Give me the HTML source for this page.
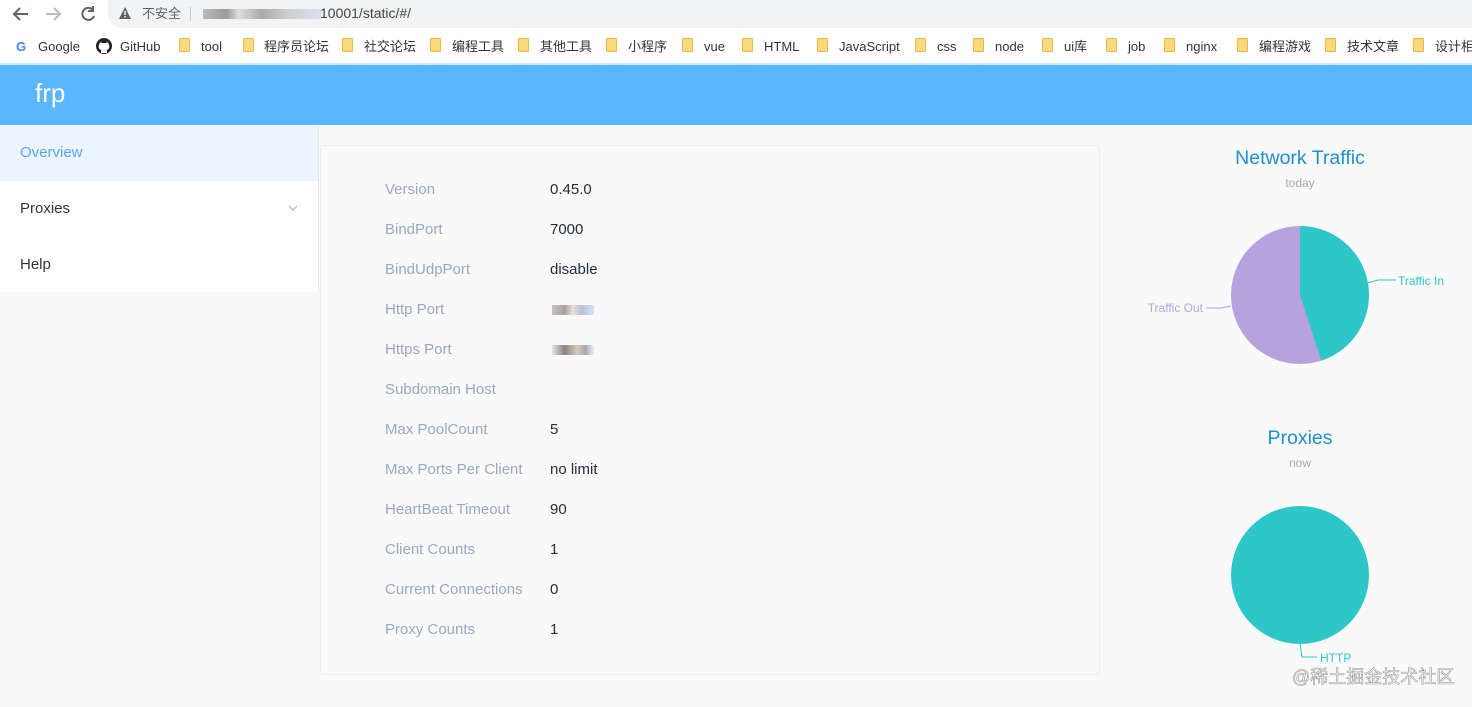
<!DOCTYPE html>
<html><head><meta charset="utf-8"><style>
*{margin:0;padding:0;box-sizing:border-box}
body{width:1472px;height:707px;overflow:hidden;background:#f9f9f9;font-family:"Liberation Sans","Noto Sans CJK SC",sans-serif;position:relative}
.abs{position:absolute}
.top{left:0;top:0;width:1472px;height:30px;background:#fff}
.addr{left:108px;top:0;width:1364px;height:28px;background:#f1f3f4;border-radius:0 0 0 14px}
.bm{left:0;top:30px;width:1472px;height:33px;background:#fff;font-size:13px;color:#333}
.bm span{position:absolute;top:9px;white-space:nowrap;line-height:15px;height:15px;overflow:visible}
.fold{position:absolute;top:8px;width:11px;height:14px;background:#fcd97a;border:1px solid #e5b94a;border-radius:1px}
.line{left:0;top:63px;width:1472px;height:2px;background:#cfe8fb}
.hdr{left:0;top:65px;width:1472px;height:60px;background:#58b7ff}
.side{left:0;top:125px;width:319px;height:167px;background:#fff;border-right:1px solid #e6e6e6}
.card{left:320px;top:145px;width:780px;height:530px;background:#f9f9f9;border:1px solid #ebeef5;border-radius:3px}
.k{position:absolute;left:385px;font-size:15px;color:#99a9bf}
.v{position:absolute;left:550px;font-size:15px;color:#1f2d3d}
</style></head><body>
<div class="abs top"></div>
<div class="abs addr"></div>
<svg class="abs" style="left:0;top:0" width="110" height="28"><path d="M28 14H14M20 8l-6 6 6 6" stroke="#5f6368" stroke-width="2" fill="none"/><path d="M46 14h14M54 8l6 6-6 6" stroke="#bbb" stroke-width="2" fill="none"/><path d="M93 10a6 6 0 1 0 1 6M93 6v5h-5" stroke="#5f6368" stroke-width="2" fill="none"/></svg>
<svg class="abs" style="left:118px;top:6px" width="14" height="14"><path d="M7 1L13 13H1Z" fill="#5f6368"/><rect x="6.3" y="5" width="1.4" height="4" fill="#fff"/><rect x="6.3" y="10" width="1.4" height="1.4" fill="#fff"/></svg>
<div class="abs" style="left:142px;top:6px;font-size:13px;line-height:16px;color:#5f6368">不安全</div>
<div class="abs" style="left:190px;top:7px;width:1px;height:14px;background:#ccc"></div>
<div class="abs" style="left:203px;top:9px;width:118px;height:10px;background:linear-gradient(90deg,#bbb,#999 20%,#ddd 30%,#aaa 50%,#ccc 70%,#d8e2ef)"></div>
<div class="abs" style="left:320px;top:5px;font-size:14px;color:#444">10001/static/#/</div>
<div class="abs bm">
<span style="left:16px;font-weight:bold;color:#4285f4">G</span><span style="left:38px">Google</span>
<svg style="position:absolute;left:96px;top:8px" width="16" height="16"><circle cx="8" cy="8" r="8" fill="#222"/><path d="M5 15v-3c-2-1-3-3-2-5 0-2 2-3 2-3l1 1h4l1-1s2 1 2 3c1 2 0 4-2 5v3" fill="#fff"/></svg>
<span style="left:120px">GitHub</span>
<i class="fold" style="left:179px"></i><span style="left:201px">tool</span>
<i class="fold" style="left:243px"></i><span style="left:264px">程序员论坛</span>
<i class="fold" style="left:342px"></i><span style="left:364px">社交论坛</span>
<i class="fold" style="left:430px"></i><span style="left:452px">编程工具</span>
<i class="fold" style="left:518px"></i><span style="left:540px">其他工具</span>
<i class="fold" style="left:606px"></i><span style="left:628px">小程序</span>
<i class="fold" style="left:682px"></i><span style="left:704px">vue</span>
<i class="fold" style="left:742px"></i><span style="left:764px">HTML</span>
<i class="fold" style="left:817px"></i><span style="left:839px">JavaScript</span>
<i class="fold" style="left:915px"></i><span style="left:937px">css</span>
<i class="fold" style="left:973px"></i><span style="left:995px">node</span>
<i class="fold" style="left:1042px"></i><span style="left:1064px">ui库</span>
<i class="fold" style="left:1106px"></i><span style="left:1128px">job</span>
<i class="fold" style="left:1164px"></i><span style="left:1186px">nginx</span>
<i class="fold" style="left:1237px"></i><span style="left:1259px">编程游戏</span>
<i class="fold" style="left:1325px"></i><span style="left:1347px">技术文章</span>
<i class="fold" style="left:1413px"></i><span style="left:1435px">设计相</span>
</div>
<div class="abs line"></div>
<div class="abs hdr"><div style="position:absolute;left:35px;top:13px;color:#fff;font-size:26px">frp</div></div>
<div class="abs side">
<div style="height:56px;background:#ecf5ff;color:#58a6f5;font-size:15px;padding:19px 0 0 20px">Overview</div>
<div style="height:56px;color:#333;font-size:15px;padding:19px 0 0 20px;position:relative">Proxies<svg style="position:absolute;left:288px;top:23px" width="10" height="8"><path d="M1 2l4 4 4-4" stroke="#aaa" fill="none"/></svg></div>
<div style="height:56px;color:#333;font-size:15px;padding:19px 0 0 20px">Help</div>
</div>
<div class="abs card"></div>
<div class="k" style="top:181px">Version</div><div class="v" style="top:181px">0.45.0</div>
<div class="k" style="top:221px">BindPort</div><div class="v" style="top:221px">7000</div>
<div class="k" style="top:261px">BindUdpPort</div><div class="v" style="top:261px">disable</div>
<div class="k" style="top:301px">Http Port</div><div class="abs" style="left:552px;top:305px;width:42px;height:10px;background:linear-gradient(90deg,#c8c0c0,#a9a0a0 30%,#eadfd9 50%,#b7c2d7 70%,#d5e3f2)"></div>
<div class="k" style="top:341px">Https Port</div><div class="abs" style="left:552px;top:345px;width:42px;height:10px;background:linear-gradient(90deg,#e8e3d8,#8a8484 30%,#d9c9b8 60%,#a8a4b2 80%,#f0f0f0)"></div>
<div class="k" style="top:381px">Subdomain Host</div>
<div class="k" style="top:421px">Max PoolCount</div><div class="v" style="top:421px">5</div>
<div class="k" style="top:461px">Max Ports Per Client</div><div class="v" style="top:461px">no limit</div>
<div class="k" style="top:501px">HeartBeat Timeout</div><div class="v" style="top:501px">90</div>
<div class="k" style="top:541px">Client Counts</div><div class="v" style="top:541px">1</div>
<div class="k" style="top:581px">Current Connections</div><div class="v" style="top:581px">0</div>
<div class="k" style="top:621px">Proxy Counts</div><div class="v" style="top:621px">1</div>
<svg class="abs" style="left:1100px;top:125px" width="372" height="582">
<text x="200" y="39" text-anchor="middle" font-size="19.5" fill="#1e90cc" font-family="Liberation Sans,sans-serif">Network Traffic</text>
<text x="200" y="62" text-anchor="middle" font-size="12" fill="#aaa" font-family="Liberation Sans,sans-serif">today</text>
<circle cx="200" cy="170" r="69" fill="#b6a2de"/>
<path d="M200 170L200 101A69 69 0 0 1 221.3 235.6Z" fill="#2ec7c9"/>
<path d="M268 158l10-3h18" stroke="#2ec7c9" fill="none"/>
<text x="298" y="160" font-size="12" fill="#2ec7c9" font-family="Liberation Sans,sans-serif">Traffic In</text>
<path d="M131 181l-10 2h-15" stroke="#b6a2de" fill="none"/>
<text x="103" y="187" text-anchor="end" font-size="12" fill="#b6a2de" font-family="Liberation Sans,sans-serif">Traffic Out</text>
<text x="200" y="319" text-anchor="middle" font-size="19.5" fill="#1e90cc" font-family="Liberation Sans,sans-serif">Proxies</text>
<text x="200" y="342" text-anchor="middle" font-size="12" fill="#aaa" font-family="Liberation Sans,sans-serif">now</text>
<circle cx="200" cy="450" r="69" fill="#2ec7c9"/>
<path d="M200 519l2 13h15" stroke="#2ec7c9" fill="none"/>
<text x="220" y="537" font-size="12" fill="#2ec7c9" font-family="Liberation Sans,sans-serif">HTTP</text>
<text x="192" y="558" font-size="18" fill="#fff" stroke="#999" stroke-width="0.6" font-family="Liberation Sans,Noto Sans CJK SC,sans-serif">@稀土掘金技术社区</text>
</svg>
</body></html>
